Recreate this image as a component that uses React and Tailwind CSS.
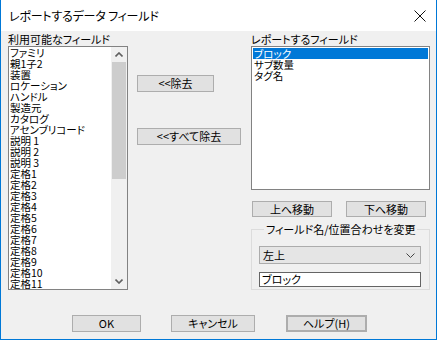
import React from "react";

const available = [
  "ファミリ",
  "親1子2",
  "装置",
  "ロケーション",
  "ハンドル",
  "製造元",
  "カタログ",
  "アセンブリコード",
  "説明 1",
  "説明 2",
  "説明 3",
  "定格1",
  "定格2",
  "定格3",
  "定格4",
  "定格5",
  "定格6",
  "定格7",
  "定格8",
  "定格9",
  "定格10",
  "定格11",
];

const reported = ["ブロック", "サブ数量", "タグ名"];

function Btn({ className, children }) {
  return (
    <div
      className={
        "flex items-center justify-center bg-[#e1e1e1] border border-[#adadad] text-[11px] leading-none text-black " +
        className
      }
    >
      {children}
    </div>
  );
}

export default function App() {
  return (
    <div className="w-[437px] h-[340px] flex flex-col bg-white font-['Noto_Sans_CJK_JP',sans-serif] [font-feature-settings:'palt'] text-black select-none">
      {/* タイトルバー */}
      <div className="h-[31px] flex items-center justify-between pl-[8px] pr-[10px] border-x border-[#0078d7]">
        <span className="text-[12px] tracking-[-0.2px]">レポートするデータ フィールド</span>
        <svg width="12" height="12" viewBox="0 0 12 12">
          <path d="M0.5 0.5 L11.5 11.5 M11.5 0.5 L0.5 11.5" stroke="#111" strokeWidth="1" />
        </svg>
      </div>

      {/* 本体 */}
      <div className="flex-1 bg-[#f0f0f0] border-x border-b border-[#0078d7] flex flex-col">
        <div className="flex pt-[2px]">
          {/* 利用可能なフィールド */}
          <div className="ml-[7px] w-[120px] flex flex-col">
            <div className="h-[13px] text-[11px] leading-[13px]">利用可能なフィールド</div>
            <div className="h-[244px] bg-white border border-[#828282] flex overflow-hidden">
              <div className="flex-1 pl-[1px] flex flex-col">
                {available.map((a) => (
                  <div key={a} className="h-[11px] text-[10.5px] leading-[11px] whitespace-nowrap">
                    {a}
                  </div>
                ))}
              </div>
              <div className="w-[16px] bg-[#f0f0f0] flex flex-col">
                <div className="h-[15px] flex items-center justify-center">
                  <svg width="8" height="5" viewBox="0 0 8 5">
                    <path d="M0.5 4.5 L4 1 L7.5 4.5" fill="none" stroke="#606060" strokeWidth="1.6" />
                  </svg>
                </div>
                <div className="mx-[1px] h-[117px] bg-[#cdcdcd]" />
                <div className="flex-1" />
                <div className="h-[15px] flex items-center justify-center">
                  <svg width="8" height="5" viewBox="0 0 8 5">
                    <path d="M0.5 0.5 L4 4 L7.5 0.5" fill="none" stroke="#606060" strokeWidth="1.6" />
                  </svg>
                </div>
              </div>
            </div>
          </div>

          {/* 中央ボタン */}
          <div className="ml-[9px] w-[114px] flex flex-col pt-[42px]">
            <Btn className="w-[77px] h-[17px]">&lt;&lt;除去</Btn>
            <Btn className="w-[104px] h-[17px] mt-[36px]">&lt;&lt;すべて除去</Btn>
          </div>

          {/* レポートするフィールド */}
          <div className="w-[179px] flex flex-col">
            <div className="h-[13px] text-[11px] leading-[13px]">レポートするフィールド</div>
            <div className="h-[144px] bg-white border border-[#828282] p-[1px] flex flex-col">
              {reported.map((r, i) => (
                <div
                  key={r}
                  className={
                    i === 0
                      ? "h-[11px] text-[10.5px] leading-[11px] bg-[#0078d7] text-white pl-[1px]"
                      : "h-[11px] text-[10.5px] leading-[11px] pl-[1px]"
                  }
                >
                  {r}
                </div>
              ))}
            </div>
            <div className="flex mt-[11px] pl-[1px] gap-[14px]">
              <Btn className="w-[80px] h-[16px]">上へ移動</Btn>
              <Btn className="w-[80px] h-[16px]">下へ移動</Btn>
            </div>
            <fieldset className="mt-[6px] h-[67px] border border-[#dcdcdc] px-[7px]">
              <legend className="ml-[5px] px-[2px] text-[11px] leading-[13px]">フィールド名/位置合わせを変更</legend>
              <div className="mt-[10px] w-[162px] h-[18px] bg-[#e5e5e5] border border-[#acacac] flex items-center justify-between pl-[3px] pr-[5px]">
                <span className="text-[11px] leading-none">左上</span>
                <svg width="9" height="5" viewBox="0 0 9 5">
                  <path d="M0.5 0.5 L4.5 4.5 L8.5 0.5" fill="none" stroke="#444" strokeWidth="1" />
                </svg>
              </div>
              <div className="mt-[8px] w-[162px] h-[15px] bg-white border border-[#646464] flex items-center pl-[2px]">
                <span className="text-[11px] leading-none">ブロック</span>
              </div>
            </fieldset>
          </div>
        </div>

        {/* 下部ボタン */}
        <div className="flex mt-[25px] pl-[71px]">
          <Btn className="w-[69px] h-[17px]">OK</Btn>
          <Btn className="ml-[30px] w-[84px] h-[17px]">キャンセル</Btn>
          <Btn className="ml-[31px] w-[81px] h-[17px] border-2 border-[#0078d7]">ヘルプ(H)</Btn>
        </div>
      </div>
    </div>
  );
}
